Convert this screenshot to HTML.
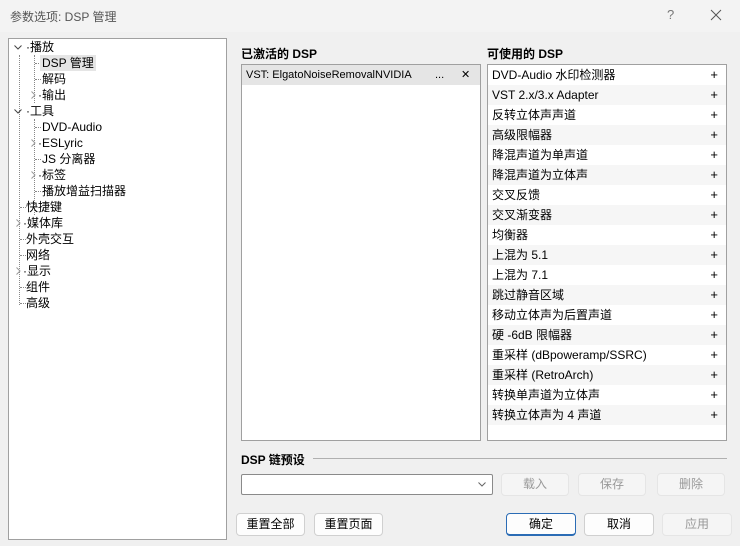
<!DOCTYPE html>
<html><head><meta charset="utf-8"><style>
*{box-sizing:border-box;margin:0;padding:0}
body{width:740px;height:546px;background:#f0f0f0;font-family:"Liberation Sans","Noto Sans CJK SC",sans-serif;font-size:12px;color:#000;position:relative;overflow:hidden}
.abs{position:absolute}
.title{left:0;top:0;width:740px;height:32px;background:#f3f3f3;}
.title span{position:absolute;left:10px;top:8px;color:#555;font-size:12px}
.tree{left:8px;top:38px;width:219px;height:502px;background:#fff;border:1px solid #a0a0a0}
.ti{position:absolute;height:16px;line-height:16px;font-size:12px;white-space:nowrap}
.list{background:#fff;border:1px solid #a0a0a0}
.row{position:absolute;left:0;right:0;height:20px;line-height:20px;padding-left:4px;font-size:12px;white-space:nowrap}
.row b{position:absolute;right:8px;top:0;font-weight:normal;font-size:13px}
.alt{background:#f6f6f6}
h3{position:absolute;font-size:12px;font-weight:bold}
.btn{position:absolute;height:23px;background:#fdfdfd;border:1px solid #d0d0d0;border-radius:4px;text-align:center;line-height:21px;font-size:12px}
.dis{background:#f5f5f5;border-color:#e5e5e5;color:#999}
.dl{position:absolute;border-left:1px dotted #888}
.dh{position:absolute;border-top:1px dotted #888;width:6px}
svg.c{position:absolute}
</style></head><body>
<div class="abs title"><span>参数选项: DSP 管理</span>
<div class="abs" style="left:667px;top:7px;color:#777;font-size:13px">?</div>
<svg class="c" style="left:710px;top:9px" width="12" height="12"><path d="M1 1L11 11M11 1L1 11" stroke="#555" stroke-width="1"/></svg></div>
<div class="abs tree">
<div class="dl" style="left:10px;top:16px;height:250px"></div>
<div class="dl" style="left:25px;top:16px;height:48px"></div>
<div class="dl" style="left:25px;top:80px;height:96px"></div>
<svg class="c" style="left:5px;top:6px" width="8" height="5"><path d="M0.5 0.5L4 4L7.5 0.5" stroke="#444" fill="none"/></svg><div class="ti" style="left:17px;top:0">·播放</div>
<div class="dh" style="left:26px;top:24px"></div><div class="ti" style="left:31px;top:16px;background:#e5e5e5;padding:0 2px">DSP 管理</div>
<div class="dh" style="left:26px;top:40px"></div><div class="ti" style="left:33px;top:32px">解码</div>
<svg class="c" style="left:22px;top:52px" width="5" height="8"><path d="M0.5 0.5L4 4L0.5 7.5" stroke="#999" fill="none"/></svg><div class="ti" style="left:29px;top:48px">·输出</div>
<svg class="c" style="left:5px;top:70px" width="8" height="5"><path d="M0.5 0.5L4 4L7.5 0.5" stroke="#444" fill="none"/></svg><div class="ti" style="left:17px;top:64px">·工具</div>
<div class="dh" style="left:26px;top:88px"></div><div class="ti" style="left:33px;top:80px">DVD-Audio</div>
<svg class="c" style="left:22px;top:100px" width="5" height="8"><path d="M0.5 0.5L4 4L0.5 7.5" stroke="#999" fill="none"/></svg><div class="ti" style="left:29px;top:96px">·ESLyric</div>
<div class="dh" style="left:26px;top:120px"></div><div class="ti" style="left:33px;top:112px">JS 分离器</div>
<svg class="c" style="left:22px;top:132px" width="5" height="8"><path d="M0.5 0.5L4 4L0.5 7.5" stroke="#999" fill="none"/></svg><div class="ti" style="left:29px;top:128px">·标签</div>
<div class="dh" style="left:26px;top:152px"></div><div class="ti" style="left:33px;top:144px">播放增益扫描器</div>
<div class="dh" style="left:11px;top:168px"></div><div class="ti" style="left:17px;top:160px">快捷键</div>
<svg class="c" style="left:7px;top:180px" width="5" height="8"><path d="M0.5 0.5L4 4L0.5 7.5" stroke="#999" fill="none"/></svg><div class="ti" style="left:14px;top:176px">·媒体库</div>
<div class="dh" style="left:11px;top:200px"></div><div class="ti" style="left:17px;top:192px">外壳交互</div>
<div class="dh" style="left:11px;top:216px"></div><div class="ti" style="left:17px;top:208px">网络</div>
<svg class="c" style="left:7px;top:228px" width="5" height="8"><path d="M0.5 0.5L4 4L0.5 7.5" stroke="#999" fill="none"/></svg><div class="ti" style="left:14px;top:224px">·显示</div>
<div class="dh" style="left:11px;top:248px"></div><div class="ti" style="left:17px;top:240px">组件</div>
<div class="dh" style="left:11px;top:264px"></div><div class="ti" style="left:17px;top:256px">高级</div>
</div>
<h3 style="left:241px;top:45px">已激活的 DSP</h3>
<h3 style="left:487px;top:45px">可使用的 DSP</h3>
<div class="abs list" style="left:241px;top:64px;width:240px;height:377px">
<div class="row" style="top:0;background:#e5e5e5;font-size:11px">VST: ElgatoNoiseRemovalNVIDIA<span style="position:absolute;left:193px">...</span><span style="position:absolute;left:219px">✕</span></div>
</div>
<div class="abs list" style="left:487px;top:64px;width:240px;height:377px">
<div class="row" style="top:0">DVD-Audio 水印检测器<b>+</b></div>
<div class="row alt" style="top:20px">VST 2.x/3.x Adapter<b>+</b></div>
<div class="row" style="top:40px">反转立体声声道<b>+</b></div>
<div class="row alt" style="top:60px">高级限幅器<b>+</b></div>
<div class="row" style="top:80px">降混声道为单声道<b>+</b></div>
<div class="row alt" style="top:100px">降混声道为立体声<b>+</b></div>
<div class="row" style="top:120px">交叉反馈<b>+</b></div>
<div class="row alt" style="top:140px">交叉渐变器<b>+</b></div>
<div class="row" style="top:160px">均衡器<b>+</b></div>
<div class="row alt" style="top:180px">上混为 5.1<b>+</b></div>
<div class="row" style="top:200px">上混为 7.1<b>+</b></div>
<div class="row alt" style="top:220px">跳过静音区域<b>+</b></div>
<div class="row" style="top:240px">移动立体声为后置声道<b>+</b></div>
<div class="row alt" style="top:260px">硬 -6dB 限幅器<b>+</b></div>
<div class="row" style="top:280px">重采样 (dBpoweramp/SSRC)<b>+</b></div>
<div class="row alt" style="top:300px">重采样 (RetroArch)<b>+</b></div>
<div class="row" style="top:320px">转换单声道为立体声<b>+</b></div>
<div class="row alt" style="top:340px">转换立体声为 4 声道<b>+</b></div>
</div>
<h3 style="left:241px;top:451px">DSP 链预设</h3>
<div class="abs" style="left:313px;top:458px;width:414px;border-top:1px solid #b0b0b0"></div>
<div class="abs" style="left:241px;top:474px;width:252px;height:21px;background:#fff;border:1px solid #8a8a8a;border-radius:2px"><svg class="c" style="right:6px;top:7px" width="8" height="5"><path d="M0.5 0.5L4 4L7.5 0.5" stroke="#666" fill="none"/></svg></div>
<div class="btn dis" style="left:501px;top:473px;width:68px">载入</div>
<div class="btn dis" style="left:578px;top:473px;width:68px">保存</div>
<div class="btn dis" style="left:657px;top:473px;width:68px">删除</div>
<div class="btn" style="left:236px;top:513px;width:69px">重置全部</div>
<div class="btn" style="left:314px;top:513px;width:69px">重置页面</div>
<div class="btn" style="left:506px;top:513px;width:70px;border-color:#2b6cb5;border-width:1px 1px 2px 1px">确定</div>
<div class="btn" style="left:584px;top:513px;width:70px">取消</div>
<div class="btn dis" style="left:662px;top:513px;width:70px">应用</div>
</body></html>
